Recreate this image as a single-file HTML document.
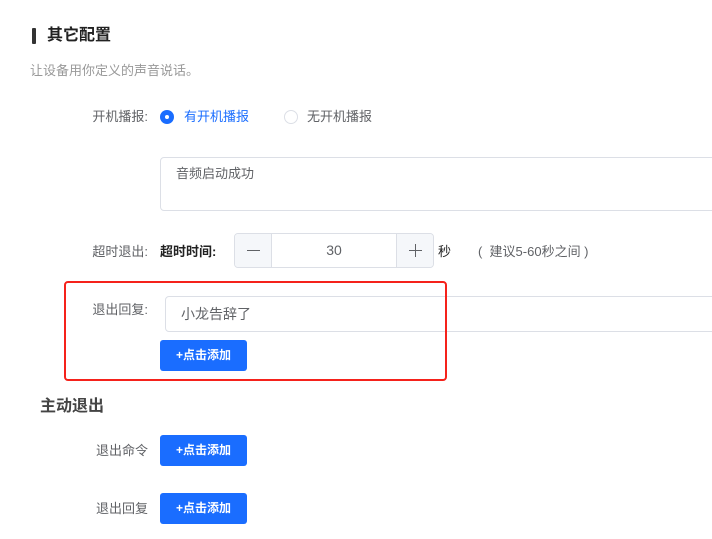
<!DOCTYPE html>
<html><head><meta charset="utf-8"><style>
*{margin:0;padding:0;box-sizing:border-box}
body{width:712px;height:539px;overflow:hidden;background:#fff;font-family:"Liberation Sans","Noto Sans CJK SC",sans-serif;position:relative;color:#606266}
.a{position:absolute;white-space:nowrap}
.lbl{font-size:13px;color:#606266;text-align:right;width:120px;left:28px}
.btn{position:absolute;left:160px;width:87px;height:31px;background:#1a6dff;border-radius:3px;color:#fff;font-size:12px;font-weight:bold;text-align:center;line-height:31px}
</style></head><body>
<div class="a" style="left:32px;top:28px;width:4px;height:16px;background:#333;border-radius:1px"></div>
<div class="a" style="left:47px;top:25px;font-size:16px;font-weight:bold;color:#222;line-height:22px">其它配置</div>
<div class="a" style="left:30px;top:62px;font-size:13px;color:#999;line-height:18px">让设备用你定义的声音说话。</div>

<div class="a lbl" style="top:108px;line-height:18px">开机播报:</div>
<div class="a" style="left:160px;top:110px;width:14px;height:14px;border-radius:50%;background:#1a6dff"></div>
<div class="a" style="left:165px;top:115px;width:4px;height:4px;border-radius:50%;background:#fff"></div>
<div class="a" style="left:184px;top:108px;font-size:13px;color:#1a6dff;line-height:18px">有开机播报</div>
<div class="a" style="left:284px;top:110px;width:14px;height:14px;border-radius:50%;border:1px solid #dcdfe6"></div>
<div class="a" style="left:307px;top:108px;font-size:13px;color:#606266;line-height:18px">无开机播报</div>

<div class="a" style="left:160px;top:157px;width:600px;height:54px;border:1px solid #dcdfe6;border-radius:4px"></div>
<div class="a" style="left:176px;top:165px;font-size:13px;color:#606266;line-height:18px">音频启动成功</div>

<div class="a lbl" style="top:243px;line-height:18px">超时退出:</div>
<div class="a" style="left:160px;top:243px;font-size:13px;font-weight:bold;color:#222;line-height:18px">超时时间:</div>
<div class="a" style="left:234px;top:233px;width:200px;height:35px;border:1px solid #dcdfe6;border-radius:4px;overflow:hidden">
 <div class="a" style="left:0;top:0;width:37px;height:33px;background:#f5f7fa;border-right:1px solid #dcdfe6"></div>
 <div class="a" style="left:12px;top:16px;width:13px;height:1px;background:#606266"></div>
 <div class="a" style="left:0;width:198px;top:0;height:33px;text-align:center;line-height:33px;font-size:14px;color:#606266">30</div>
 <div class="a" style="right:0;top:0;width:37px;height:33px;background:#f5f7fa;border-left:1px solid #dcdfe6"></div>
 <div class="a" style="left:174px;top:16px;width:13px;height:1px;background:#606266"></div>
 <div class="a" style="left:180px;top:10px;width:1px;height:13px;background:#606266"></div>
</div>
<div class="a" style="left:438px;top:243px;font-size:13px;color:#222;line-height:18px">秒</div>
<div class="a" style="left:478px;top:243px;font-size:13px;color:#606266;line-height:18px">(&nbsp; 建议5-60秒之间 )</div>

<div class="a" style="left:165px;top:296px;width:600px;height:36px;border:1px solid #dcdfe6;border-radius:4px"></div>
<div class="a" style="left:64px;top:281px;width:383px;height:100px;border:2px solid #f5221b;border-radius:4px"></div>
<div class="a lbl" style="top:301px;line-height:18px">退出回复:</div>
<div class="a" style="left:181px;top:304px;font-size:14px;color:#606266;line-height:20px">小龙告辞了</div>
<div class="btn" style="top:340px">+点击添加</div>

<div class="a" style="left:40px;top:396px;font-size:16px;font-weight:bold;color:#444;line-height:22px">主动退出</div>
<div class="a lbl" style="top:442px;line-height:18px">退出命令</div>
<div class="btn" style="top:435px">+点击添加</div>
<div class="a lbl" style="top:500px;line-height:18px">退出回复</div>
<div class="btn" style="top:493px">+点击添加</div>
</body></html>
